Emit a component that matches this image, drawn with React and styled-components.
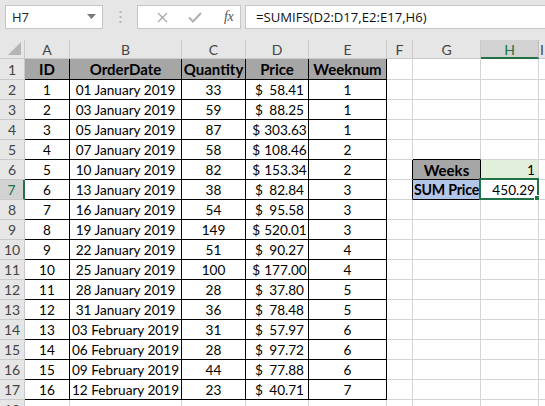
import React from "react";
import styled, { createGlobalStyle } from "styled-components";

const Global = createGlobalStyle`
  html, body { margin: 0; padding: 0; background: #fff; }
  body { width: 545px; height: 406px; overflow: hidden; }
  #root { width: 545px; height: 406px; overflow: hidden; }
`;

const GREEN = "#217346";
const GRID = "#d4d4d4";
const HEAD_LINE = "#c9c9c9";

const Page = styled.div`
  display: flex;
  flex-direction: column;
  width: 545px;
  height: 406px;
  overflow: hidden;
`;

const TopBar = styled.div`
  height: 40px;
  flex: none;
  box-sizing: border-box;
  background: #e6e6e6;
  display: flex;
  align-items: flex-start;
  padding: 5px 0 0 5px;
  font-family: "Open Sans", "Noto Sans", sans-serif;
`;

const NameBox = styled.div`
  width: 98px;
  height: 24px;
  box-sizing: border-box;
  background: #fff;
  border: 1px solid #c6c6c6;
  display: flex;
  align-items: center;
  justify-content: space-between;
  padding: 0 6px 0 6px;
  font-size: 13px;
  color: #222;
`;

const Dots = styled.div`
  width: 34px;
  height: 24px;
  display: flex;
  align-items: center;
  justify-content: center;
`;

const EditButtons = styled.div`
  width: 104px;
  height: 24px;
  box-sizing: border-box;
  background: #fff;
  border: 1px solid #c6c6c6;
  display: flex;
  align-items: center;
  padding-left: 19px;
`;

const IconSlot = styled.div`
  width: ${(p) => p.$w}px;
  display: flex;
  align-items: center;
`;

const Fx = styled.span`
  font-family: "Liberation Serif", "DejaVu Serif", serif;
  font-style: italic;
  font-size: 14px;
  color: #555;
  letter-spacing: -0.5px;
`;

const FormulaBox = styled.div`
  flex: 1;
  margin-left: 4px;
  height: 24px;
  box-sizing: border-box;
  background: #fff;
  border: 1px solid #c6c6c6;
  border-right: none;
  display: flex;
  align-items: center;
  padding-left: 10px;
  font-size: 13.1px;
  color: #111;
`;

const Sheet = styled.div`
  display: grid;
  grid-template-columns: 25px 45px 112px 64px 63px 78px 26px 68px 58px 1fr;
  grid-template-rows: 19px 21px repeat(17, 20px);
  font-family: "Lato", "Open Sans", sans-serif;
  font-size: 13.6px;
  color: #000;
`;

const Corner = styled.div`
  background: #e6e6e6;
  border-right: 1px solid ${HEAD_LINE};
  border-bottom: 1px solid ${HEAD_LINE};
  box-sizing: border-box;
  display: flex;
  align-items: flex-end;
  justify-content: flex-end;
  padding: 0 3px 3px 0;
`;

const ColHead = styled.div`
  box-sizing: border-box;
  background: ${(p) => (p.$active ? "#d2d2d2" : "#e6e6e6")};
  color: ${(p) => (p.$active ? GREEN : "#444")};
  border-right: 1px solid ${(p) => (p.$active ? "#bdbdbd" : HEAD_LINE)};
  border-bottom: ${(p) => (p.$active ? `2px solid ${GREEN}` : `1px solid ${HEAD_LINE}`)};
  display: flex;
  align-items: center;
  justify-content: center;
  font-size: 14px;
  padding-top: ${(p) => (p.$active ? "1px" : "0")};
`;

const RowHead = styled.div`
  box-sizing: border-box;
  background: ${(p) => (p.$active ? "#d2d2d2" : "#e6e6e6")};
  color: ${(p) => (p.$active ? GREEN : "#444")};
  border-right: ${(p) => (p.$active ? `2px solid ${GREEN}` : `1px solid ${HEAD_LINE}`)};
  border-bottom: 1px solid ${HEAD_LINE};
  display: flex;
  align-items: center;
  justify-content: center;
  font-size: 14px;
  overflow: hidden;
`;

const Cell = styled.div`
  position: relative;
  box-sizing: border-box;
  min-width: 0;
  background: ${(p) => p.$bg || "#fff"};
  border-right: 1px solid ${(p) => p.$right};
  border-bottom: 1px solid ${(p) => p.$bottom};
  display: flex;
  align-items: center;
  justify-content: ${(p) => p.$align || "center"};
  padding: 0 ${(p) => (p.$tight ? "0" : "3px")};
  font-weight: ${(p) => (p.$bold ? 700 : 400)};
  font-size: ${(p) => (p.$tight ? "14.2px" : p.$bold ? "15px" : "inherit")};
  letter-spacing: ${(p) => (p.$tight ? "-0.2px" : "normal")};
  white-space: nowrap;
`;

const Money = styled.div`
  flex: 1;
  display: flex;
  justify-content: space-between;
  gap: 4px;
  padding-left: 6px;
  padding-right: 1px;
`;

const Selection = styled.div`
  position: absolute;
  left: -2px;
  top: -2px;
  right: -1px;
  bottom: -1px;
  border: 2px solid ${GREEN};
  pointer-events: none;
`;

const Handle = styled.div`
  position: absolute;
  right: -4px;
  bottom: -4px;
  width: 5px;
  height: 5px;
  background: ${GREEN};
  border: 1px solid #fff;
`;

const rows = [
  [1, "01 January 2019", 33, "58.41", 1],
  [2, "03 January 2019", 59, "88.25", 1],
  [3, "05 January 2019", 87, "303.63", 1],
  [4, "07 January 2019", 58, "108.46", 2],
  [5, "10 January 2019", 82, "153.34", 2],
  [6, "13 January 2019", 38, "82.84", 3],
  [7, "16 January 2019", 54, "95.58", 3],
  [8, "19 January 2019", 149, "520.01", 3],
  [9, "22 January 2019", 51, "90.27", 4],
  [10, "25 January 2019", 100, "177.00", 4],
  [11, "28 January 2019", 28, "37.80", 5],
  [12, "31 January 2019", 36, "78.48", 5],
  [13, "03 February 2019", 31, "57.97", 6],
  [14, "06 February 2019", 28, "97.72", 6],
  [15, "09 February 2019", 44, "77.88", 6],
  [16, "12 February 2019", 23, "40.71", 7],
];

const COLS = ["A", "B", "C", "D", "E", "F", "G", "H", "I"];
const NROWS = 18;

const isBoxed = (r, c) => {
  if (r >= 1 && r <= 17 && c >= 0 && c <= 4) return true;
  if ((r === 6 || r === 7) && c === 6) return true;
  return false;
};

const cellContent = (r, c) => {
  if (r === 1 && c <= 4) {
    return { text: ["ID", "OrderDate", "Quantity", "Price", "Weeknum"][c], bold: true, bg: "#a6a6a6" };
  }
  if (r >= 2 && r <= 17 && c <= 4) {
    const d = rows[r - 2];
    if (c === 3) return { money: d[3] };
    return { text: String(d[c]) };
  }
  if (r === 6 && c === 6) return { text: "Weeks", bold: true, bg: "#a6a6a6" };
  if (r === 7 && c === 6) return { text: "SUM Price", bold: true, tight: true, bg: "#b4c6e7" };
  if (r === 6 && c === 7) return { text: "1", align: "flex-end", bg: "#e2efda" };
  if (r === 7 && c === 7) return { text: "450.29", align: "flex-end", selected: true };
  return {};
};

const DropArrow = () => (
  <svg width="9" height="6" viewBox="0 0 9 6">
    <polygon points="0,0 9,0 4.5,5" fill="#7a7a7a" />
  </svg>
);

const VDots = () => (
  <svg width="3" height="12" viewBox="0 0 3 12">
    <rect x="0.5" y="0" width="2" height="2" fill="#b5b5b5" />
    <rect x="0.5" y="5" width="2" height="2" fill="#b5b5b5" />
    <rect x="0.5" y="10" width="2" height="2" fill="#b5b5b5" />
  </svg>
);

const Cross = () => (
  <svg width="11" height="11" viewBox="0 0 11 11">
    <path d="M1 1 L10 10 M10 1 L1 10" stroke="#a8a8a8" strokeWidth="1.3" fill="none" />
  </svg>
);

const Check = () => (
  <svg width="14" height="11" viewBox="0 0 14 11">
    <path d="M1 5.5 L5 9.5 L13 1" stroke="#b0b0b0" strokeWidth="2" fill="none" />
  </svg>
);

const CornerMark = () => (
  <svg width="13" height="13" viewBox="0 0 13 13">
    <polygon points="13,0 13,13 0,13" fill="#b5b5b5" />
  </svg>
);

export default function App() {
  const cells = [];
  cells.push(
    <Corner key="corner">
      <CornerMark />
    </Corner>
  );
  COLS.forEach((c) => {
    cells.push(
      <ColHead key={"h" + c} $active={c === "H"}>
        {c}
      </ColHead>
    );
  });
  for (let r = 1; r <= NROWS; r++) {
    cells.push(
      <RowHead key={"r" + r} $active={r === 7}>
        {r}
      </RowHead>
    );
    for (let c = 0; c < COLS.length; c++) {
      const info = cellContent(r, c);
      const right = isBoxed(r, c) || isBoxed(r, c + 1) ? "#000" : GRID;
      const bottom = isBoxed(r, c) || isBoxed(r + 1, c) ? "#000" : GRID;
      cells.push(
        <Cell
          key={r + "-" + c}
          $right={right}
          $bottom={bottom}
          $bg={info.bg}
          $bold={info.bold}
          $tight={info.tight}
          $align={info.align}
        >
          {info.money ? (
            <Money>
              <span>$</span>
              <span>{info.money}</span>
            </Money>
          ) : (
            info.text
          )}
          {info.selected && (
            <Selection>
              <Handle />
            </Selection>
          )}
        </Cell>
      );
    }
  }

  return (
    <Page>
      <Global />
      <TopBar>
        <NameBox>
          <span>H7</span>
          <DropArrow />
        </NameBox>
        <Dots>
          <VDots />
        </Dots>
        <EditButtons>
          <IconSlot $w={31}>
            <Cross />
          </IconSlot>
          <IconSlot $w={36}>
            <Check />
          </IconSlot>
          <IconSlot $w={16}>
            <Fx>fx</Fx>
          </IconSlot>
        </EditButtons>
        <FormulaBox>=SUMIFS(D2:D17,E2:E17,H6)</FormulaBox>
      </TopBar>
      <Sheet>{cells}</Sheet>
    </Page>
  );
}
